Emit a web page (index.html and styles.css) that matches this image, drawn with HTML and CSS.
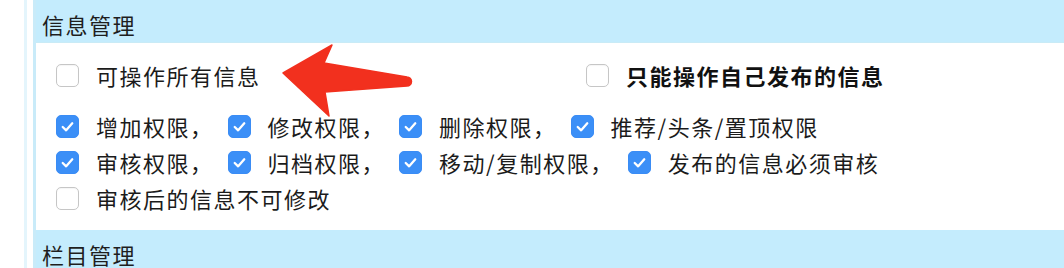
FILE: index.html
```html
<!DOCTYPE html>
<html lang="zh-CN">
<head>
<meta charset="utf-8">
<title>权限设置</title>
<link rel="stylesheet" href="styles.css">
</head>
<body>
<div class="frame">
  <div class="panel">
    <section class="group">
      <div class="group-head">信息管理</div>
      <div class="group-body">
        <div class="scope-row">
          <label class="opt scope-all"><span class="box"></span><span class="txt">可操作所有信息</span></label>
          <label class="opt strong"><span class="box"></span><span class="txt">只能操作自己发布的信息</span></label>
        </div>
        <div class="perm-row">
          <label class="opt"><span class="box on"><svg viewBox="0 0 22 22"><path d="M6 11.5 L9.6 15 L16 7.6"/></svg></span><span class="txt">增加权限，</span></label>
          <label class="opt"><span class="box on"><svg viewBox="0 0 22 22"><path d="M6 11.5 L9.6 15 L16 7.6"/></svg></span><span class="txt">修改权限，</span></label>
          <label class="opt"><span class="box on"><svg viewBox="0 0 22 22"><path d="M6 11.5 L9.6 15 L16 7.6"/></svg></span><span class="txt">删除权限，</span></label>
          <label class="opt"><span class="box on"><svg viewBox="0 0 22 22"><path d="M6 11.5 L9.6 15 L16 7.6"/></svg></span><span class="txt">推荐/头条/置顶权限</span></label>
        </div>
        <div class="perm-row">
          <label class="opt"><span class="box on"><svg viewBox="0 0 22 22"><path d="M6 11.5 L9.6 15 L16 7.6"/></svg></span><span class="txt">审核权限，</span></label>
          <label class="opt"><span class="box on"><svg viewBox="0 0 22 22"><path d="M6 11.5 L9.6 15 L16 7.6"/></svg></span><span class="txt">归档权限，</span></label>
          <label class="opt"><span class="box on"><svg viewBox="0 0 22 22"><path d="M6 11.5 L9.6 15 L16 7.6"/></svg></span><span class="txt">移动/复制权限，</span></label>
          <label class="opt"><span class="box on"><svg viewBox="0 0 22 22"><path d="M6 11.5 L9.6 15 L16 7.6"/></svg></span><span class="txt">发布的信息必须审核</span></label>
        </div>
        <div class="perm-row">
          <label class="opt"><span class="box"></span><span class="txt">审核后的信息不可修改</span></label>
        </div>
      </div>
    </section>
    <section class="group">
      <div class="group-head">栏目管理</div>
    </section>
  </div>
  <svg class="arrow" viewBox="0 0 140 82" width="140" height="82">
    <path d="M6 33 L55 5 L47 23 L130 37 A4.5 4.5 0 0 1 130 46 L48 52 L52 76 Z"/>
  </svg>
</div>
</body>
</html>
```

FILE: styles.css
```css
html, body {
  margin: 0;
  padding: 0;
  background: #ffffff;
}

body {
  font-family: "Noto Sans CJK SC", "Noto Sans", sans-serif;
  font-size: 22px;
  color: #1b1b1b;
  letter-spacing: 1.5px;
}

.frame {
  position: relative;
  box-sizing: border-box;
  height: 268px;
  overflow: hidden;
  margin-left: 24px;
  border-left: 3px solid #e4f5fc;
  padding-left: 6px;
}

.panel {
  height: 100%;
  border-left: 3px solid #c9ebf9;
}

.group-head {
  display: flex;
  align-items: center;
  box-sizing: border-box;
  height: 43px;
  padding: 5px 0 0 6px;
  background: #c4ecfd;
  border-bottom: 1px solid #c9ebf6;
  line-height: 30px;
  color: #1e1e1e;
}

.group-body {
  padding: 14px 0 14px 20px;
}

.scope-row {
  display: flex;
  align-items: center;
  height: 36px;
  margin-bottom: 15px;
}

.scope-all {
  flex: 0 0 530px;
}

.perm-row {
  display: flex;
  align-items: center;
  height: 36px;
  column-gap: 14px;
}

.opt {
  display: flex;
  align-items: center;
  line-height: 36px;
  white-space: nowrap;
}

.box {
  flex: 0 0 auto;
  box-sizing: border-box;
  width: 23px;
  height: 23px;
  margin-right: 17px;
  border: 1px solid #c6c6c6;
  border-radius: 5px;
  background: #ffffff;
  box-shadow: inset 0 1px 1px rgba(0, 0, 0, 0.04);
}

.box.on {
  border-color: #3a8cf5;
  background: #3b8ff7;
  box-shadow: none;
}

.box svg {
  display: block;
  width: 21px;
  height: 21px;
}

.box svg path {
  fill: none;
  stroke: #ffffff;
  stroke-width: 2.4;
  stroke-linecap: round;
  stroke-linejoin: round;
}

.strong .txt {
  font-weight: 700;
  color: #111111;
}

.arrow {
  position: absolute;
  left: 250px;
  top: 40px;
  pointer-events: none;
}

.arrow path {
  fill: #f2301e;
  stroke: #f2301e;
  stroke-width: 1.5;
  stroke-linejoin: round;
}
```
